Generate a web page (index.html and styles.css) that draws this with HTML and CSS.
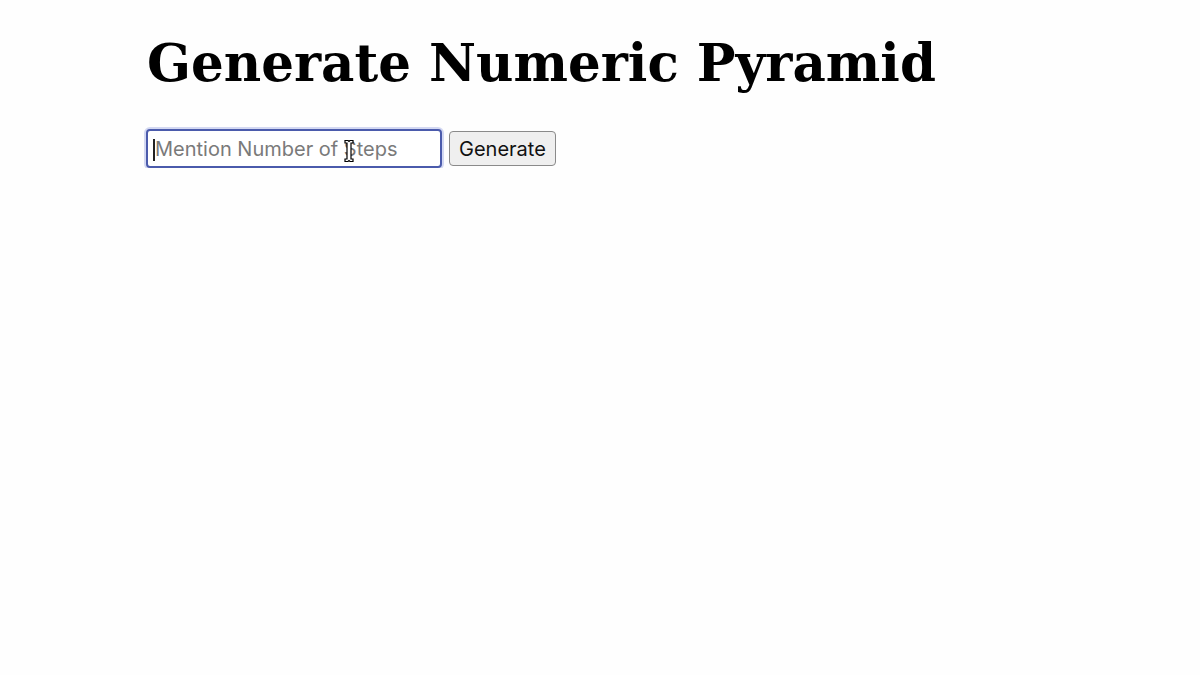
FILE: index.html
```html
<!DOCTYPE html>
<html>
<head>
<meta charset="utf-8">
<link rel="stylesheet" href="styles.css">
</head>
<body>
<main class="page">
  <h1 class="title">Generate Numeric Pyramid</h1>
  <form class="controls">
    <div class="field">
      <input class="steps" type="text" placeholder="Mention Number of Steps">
      <span class="caret"></span>
      <svg class="ibeam" width="12" height="24" viewBox="0 0 12 24">
        <path d="M2 1.5h3l1 1 1-1h3v2.5H8v16h2v2.5H7l-1-1-1 1H2v-2.5h2v-16H2z" fill="#fff" stroke="#000" stroke-width="1.2"/>
      </svg>
    </div>
    <button class="generate" type="button">Generate</button>
  </form>
</main>
</body>
</html>
```
FILE: styles.css
```css
html, body {
  margin: 0;
  padding: 0;
  background: #fefefe;
}
.page {
  padding: 27px 0 0 147px;
}
.title {
  margin: 0;
  font-family: "DejaVu Serif", serif;
  font-weight: bold;
  font-size: 51.5px;
  line-height: 72px;
  color: #000;
  letter-spacing: 0;
}
.controls {
  margin: 30px 0 0 -1px;
  display: flex;
  align-items: center;
  gap: 7px;
}
.field {
  position: relative;
}
.steps {
  box-sizing: border-box;
  width: 296px;
  height: 39px;
  border: 2px solid #4b5bac;
  border-radius: 4px;
  box-shadow: 0 0 0 2px #d3d8f2;
  padding: 0 7px;
  font-family: Inter, "Noto Sans", sans-serif;
  font-size: 20px;
  color: #222;
  outline: none;
  background: #fff;
}
.steps::placeholder {
  color: #7a7a7a;
}
.caret {
  position: absolute;
  left: 7px;
  top: 10px;
  width: 2px;
  height: 22px;
  background: #222;
}
.ibeam {
  position: absolute;
  left: 197px;
  top: 10px;
}
.generate {
  box-sizing: border-box;
  height: 35px;
  padding: 0 9px;
  font-family: Inter, "Noto Sans", sans-serif;
  font-size: 20px;
  color: #111;
  background: #efefef;
  border: 1.5px solid #8a8a8a;
  border-radius: 4px;
}
```
